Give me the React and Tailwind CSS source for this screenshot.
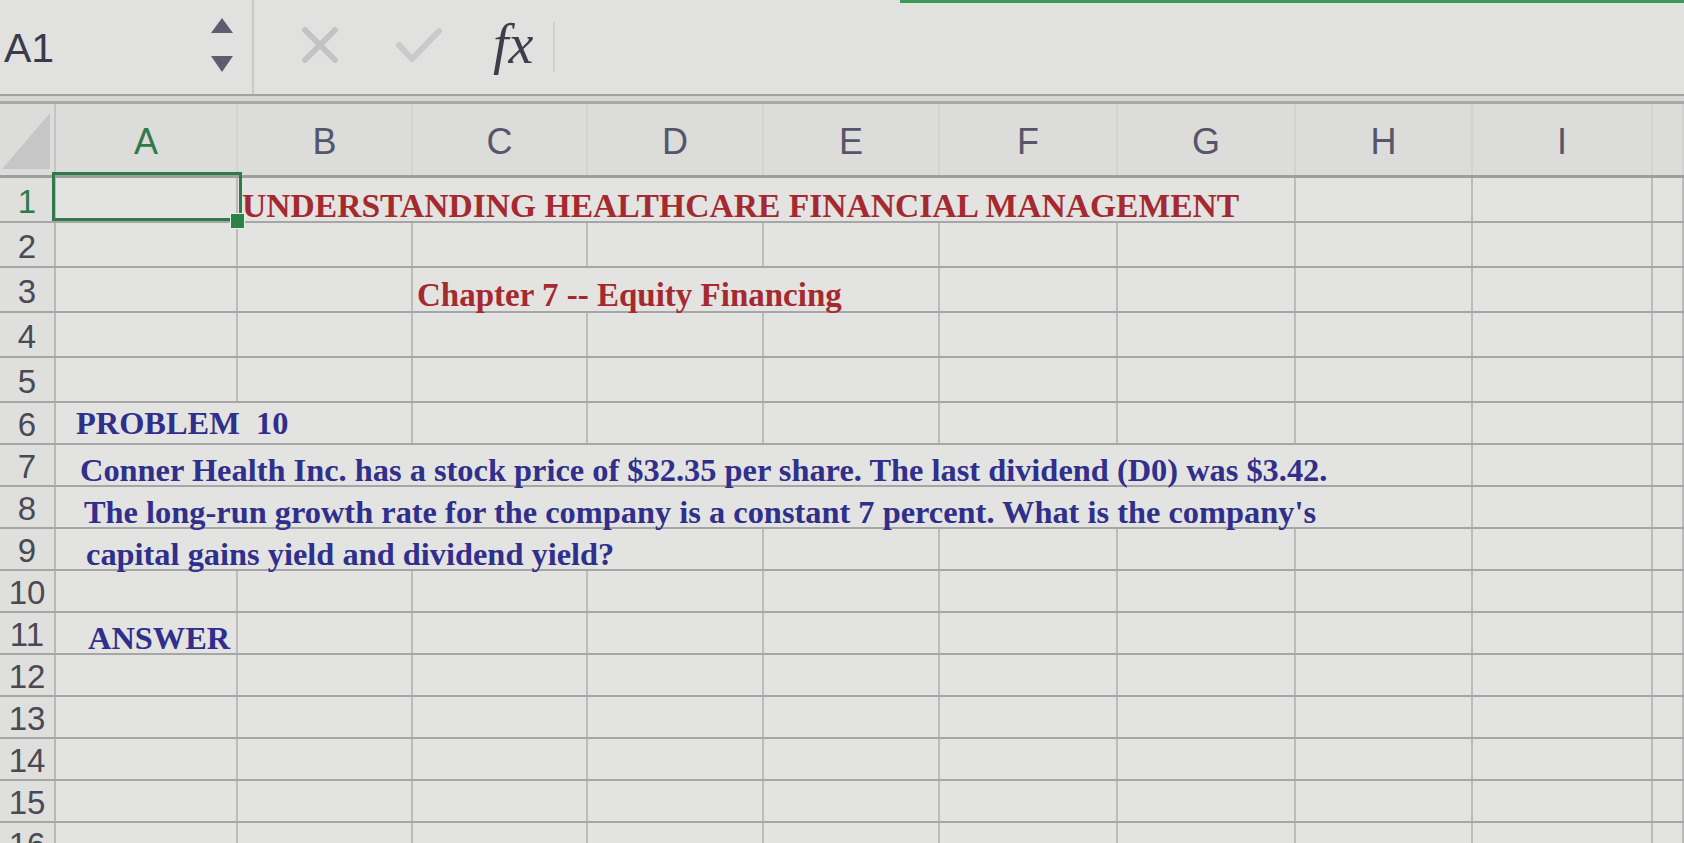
import React from 'react'

// column template: row header, A..I, then the clipped J
const GRID = 'grid grid-cols-[56px_182px_175px_175px_176px_176px_178px_178px_177px_180px_1fr]'
const LETTERS = ['A', 'B', 'C', 'D', 'E', 'F', 'G', 'H', 'I', '']

const serif = "font-['Liberation_Serif','Times_New_Roman',serif]"
const sans = "font-['Liberation_Sans',Arial,sans-serif]"

const red = 'text-[#a52a2f]'
const blue = 'text-[#302f8c] text-[32.4px]'
const low = 'leading-[0.9] pb-0'

// each row: list of [span, text, extra classes]
const ROWS = [
  { n: 1, h: 'h-[45px]', cells: [[1, null, 'sel'], [6, 'UNDERSTANDING HEALTHCARE FINANCIAL MANAGEMENT', `${red} ${low} pl-1 text-[33.6px]`], [1], [1], [1]] },
  { n: 2, h: 'h-[45px]' },
  { n: 3, h: 'h-[45px]', cells: [[1], [1], [3, 'Chapter 7 -- Equity Financing', `${red} ${low} pl-1 text-[33px]`], [1], [1], [1], [1], [1]] },
  { n: 4, h: 'h-[45px]' },
  { n: 5, h: 'h-[45px]' },
  { n: 6, h: 'h-[42px]', cells: [[2, 'PROBLEM  10', `${blue} leading-none pb-[4px] pl-5`], [1], [1], [1], [1], [1], [1], [1], [1]] },
  { n: 7, h: 'h-[42px]', cells: [[8, 'Conner Health Inc. has a stock price of $32.35 per share. The last dividend (D0) was $3.42.', `${blue} ${low} pl-6`], [1], [1]] },
  { n: 8, h: 'h-[42px]', cells: [[8, "The long-run growth rate for the company is a constant 7 percent. What is the company's", `${blue} ${low} pl-7`], [1], [1]] },
  { n: 9, h: 'h-[42px]', cells: [[4, 'capital gains yield and dividend yield?', `${blue} ${low} pl-[30px]`], [1], [1], [1], [1], [1], [1]] },
  { n: 10, h: 'h-[42px]' },
  { n: 11, h: 'h-[42px]', cells: [[1, 'ANSWER', `${blue} ${low} pl-8`], [1], [1], [1], [1], [1], [1], [1], [1], [1]] },
  { n: 12, h: 'h-[42px]' },
  { n: 13, h: 'h-[42px]' },
  { n: 14, h: 'h-[42px]' },
  { n: 15, h: 'h-[42px]' },
  { n: 16, h: 'h-[42px]' },
]

const SPANS = {
  1: 'col-span-1', 2: 'col-span-2', 3: 'col-span-3', 4: 'col-span-4',
  6: 'col-span-6', 8: 'col-span-8',
}

function FormulaBar() {
  return (
    <div className="relative h-[94px] bg-[#e1e1df] flex items-stretch">
      <div className="absolute left-[900px] right-0 top-0 h-[3px] bg-[#3c9856]" />
      {/* name box */}
      <div className="w-[254px] flex items-center justify-between pl-[4px] pr-[18px] border-r-2 border-[#c8c8c8]">
        <span className={`${sans} text-[41px] leading-none text-[#3b3a4a] mt-[2px]`}>A1</span>
        <svg width="24" height="58" viewBox="0 0 24 58" className="-mt-[4px]">
          <polygon points="12,2 23,17 1,17" fill="#5e5d70" />
          <polygon points="1,40 23,40 12,56" fill="#5e5d70" />
        </svg>
      </div>
      <div className="flex items-center pl-[47px] gap-[56px] -mt-[4px]">
        <svg width="38" height="38" viewBox="0 0 38 38">
          <path d="M4 4 L34 34 M34 4 L4 34" stroke="#c3c3c6" strokeWidth="6" strokeLinecap="round" />
        </svg>
        <svg width="48" height="38" viewBox="0 0 48 38">
          <path d="M4 19 L17 33 L44 5" stroke="#cacacd" strokeWidth="6" fill="none" strokeLinecap="round" strokeLinejoin="round" />
        </svg>
      </div>
      <div className="flex items-center pl-[50px] pr-[20px] -mt-[6px]">
        <span className={`${serif} italic text-[56px] leading-none text-[#3e3d4c]`}>fx</span>
      </div>
      <div className="self-center w-[2px] h-[50px] bg-[#d0d0d0]" />
    </div>
  )
}

function HeaderRow() {
  return (
    <div className={`${GRID} h-[74px] bg-[#dcdcda] border-b-[3px] border-[#9e9e9e]`}>
      <div className="relative border-r-2 border-[#c4c4c4] overflow-hidden">
        <svg width="48" height="56" viewBox="0 0 48 56" className="absolute right-[4px] bottom-[6px]">
          <polygon points="0,56 48,56 48,0" fill="#c6c6c6" />
        </svg>
      </div>
      {LETTERS.map((l, i) => (
        <div
          key={i}
          className={`flex items-center justify-center border-r-2 border-[#d2d2d2] ${sans} text-[36px] leading-none pt-[4px] ${l === 'A' ? 'text-[#2f7a48]' : 'text-[#56566a]'}`}
        >
          {l}
        </div>
      ))}
    </div>
  )
}

function Row({ row }) {
  const cells = row.cells || LETTERS.map(() => [1])
  return (
    <div className={`${GRID} ${row.h} border-b-2 border-[#a6a6a6]`}>
      <div
        className={`flex items-center justify-center border-r-2 border-[#b9b9b9] bg-[#dfdfdd] ${sans} text-[33px] leading-none pt-[3px] ${row.n === 1 ? 'text-[#2f7a48]' : 'text-[#4a4a55]'}`}
      >
        {row.n}
      </div>
      {cells.map(([span, text, cls], i) => {
        if (cls === 'sel') {
          return (
            <div key={i} className="relative border-r-2 border-[#b9b9b9] z-10">
              <div className="absolute -left-[4px] -right-[6px] -top-[6px] bottom-[0px] border-[3px] border-[#2e7a49]" />
              <div className="absolute -right-[9px] -bottom-[8px] w-[15px] h-[16px] bg-[#2e8049] border border-[#e8f0ea]" />
            </div>
          )
        }
        return (
          <div
            key={i}
            className={`${SPANS[span]} flex items-end border-r-2 border-[#bcbcbc] overflow-visible whitespace-pre`}
          >
            {text && (
              <span className={`${serif} font-bold ${cls}`}>{text}</span>
            )}
          </div>
        )
      })}
    </div>
  )
}

export default function App() {
  return (
    <div className="w-[1684px] h-[843px] overflow-hidden bg-[#e3e3e1]">
      <FormulaBar />
      <div className="h-[2px] bg-[#a2a2a2]" />
      <div className="h-[5px] bg-[#d6d6d4]" />
      <div className="h-[3px] bg-[#a8a8a8]" />
      <HeaderRow />
      {ROWS.map((r) => (
        <Row key={r.n} row={r} />
      ))}
    </div>
  )
}
